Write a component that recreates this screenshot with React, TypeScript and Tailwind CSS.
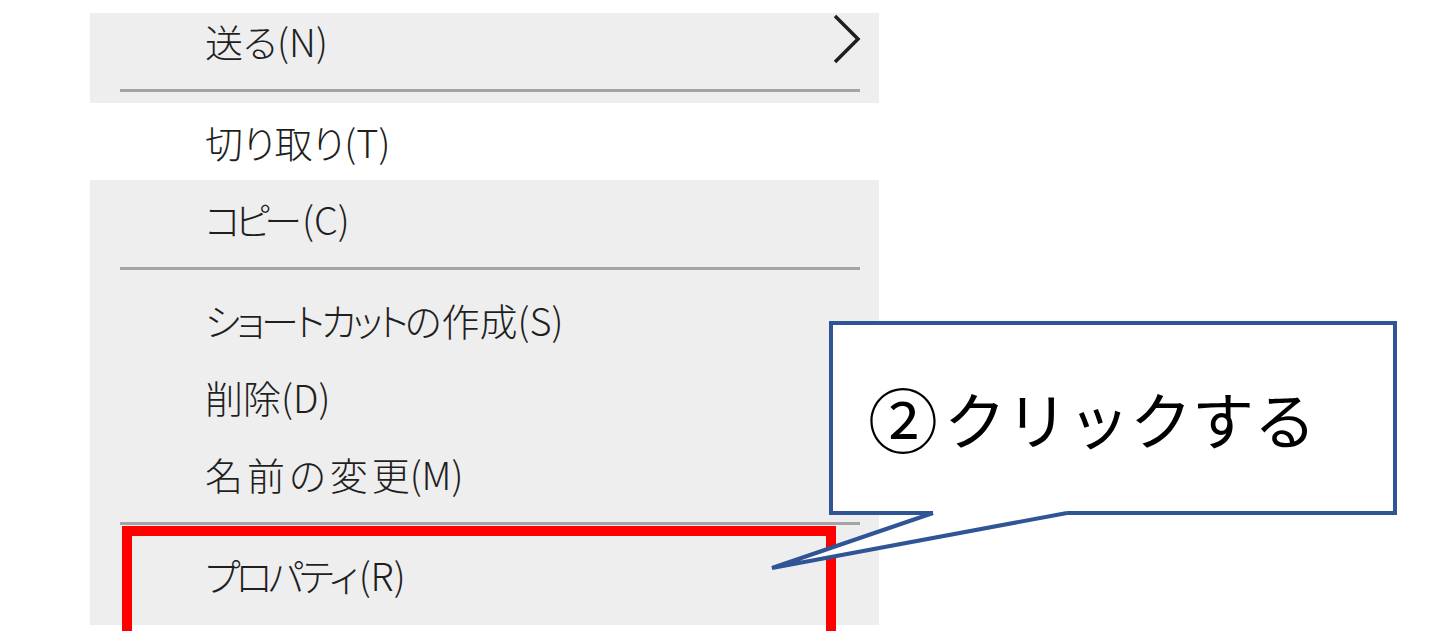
import React from "react";

const menuFont = {
  fontFamily: '"Noto Sans CJK JP", "Noto Sans", sans-serif',
  fontFeatureSettings: '"palt"',
};

const calloutFont = { fontFamily: '"Noto Sans CJK JP", "Noto Sans", sans-serif' };

function Separator({ top = 10 }: { top?: number }) {
  return (
    <div className={`${top === 9 ? "pt-[9px]" : "pt-[10px]"} pb-[11px] pl-[30px] pr-[19px]`}>
      <div className="h-[3px] bg-[#a4a4a4]" />
    </div>
  );
}

function MenuItem({
  label,
  active,
  submenu,
  first,
}: {
  label: React.ReactNode;
  active?: boolean;
  submenu?: boolean;
  first?: boolean;
}) {
  return (
    <div
      className={`flex items-center justify-between pl-[115px] pr-[17px] ${first ? "h-[67px] pb-[12px]" : "h-[77px]"} ${active ? "bg-white" : ""}`}
    >
      <span className="text-[38px] font-light leading-none text-[#1f1f1f]" style={menuFont}>
        {label}
      </span>
      {submenu && (
        <svg width="30" height="52" viewBox="0 0 30 52" className="self-start">
          <path d="M3 3 L26 26 L3 49" fill="none" stroke="#1f1f1f" strokeWidth="3.5" />
        </svg>
      )}
    </div>
  );
}

export default function App() {
  return (
    <div className="relative w-[1435px] h-[631px] overflow-hidden bg-white">
      <div className="ml-[90px] mt-[13px] w-[789px] bg-[#eeeeee] pb-[12px]">
        <MenuItem label="送る(N)" submenu first />
        <Separator top={9} />
        <MenuItem label="切り取り(T)" active />
        <MenuItem
          label={
            <>
              <span className="tracking-[-6px]">コピ</span>ー(C)
            </>
          }
        />
        <Separator />
        <MenuItem
          label={
            <>
              <span className="tracking-[-3.5px]">ショートカット</span>の作成(S)
            </>
          }
        />
        <MenuItem label="削除(D)" />
        <MenuItem
          label={
            <>
              <span className="tracking-[4px]">名前の変</span>更(M)
            </>
          }
        />
        <Separator />
        <MenuItem
          label={
            <>
              <span className="tracking-[-4.5px]">プロパテ</span>ィ(R)
            </>
          }
        />
      </div>

      {/* red highlight around the target item */}
      <div className="absolute left-[122px] top-[526px] w-[714px] h-[115px] border-[10px] border-[#ff0000]" />

      {/* callout */}
      <div className="absolute left-[829px] top-[321px] w-[568px] h-[194px] border-[4px] border-[#2f5597] bg-white flex items-center pl-[35px]">
        <span className="text-[70px] leading-none text-black" style={calloutFont}>
          ②
        </span>
        <span className="ml-[6px] text-[62px] leading-none text-black" style={calloutFont}>
          クリックする
        </span>
      </div>
      <svg className="absolute left-[760px] top-[505px]" width="320" height="75" viewBox="0 0 320 75">
        <polygon points="173,1 307,1 307,8 12,63 173,8" fill="#ffffff" />
        <polyline points="173,8 12,63 307,8" fill="none" stroke="#2f5597" strokeWidth="4" strokeLinejoin="miter" />
      </svg>
    </div>
  );
}
